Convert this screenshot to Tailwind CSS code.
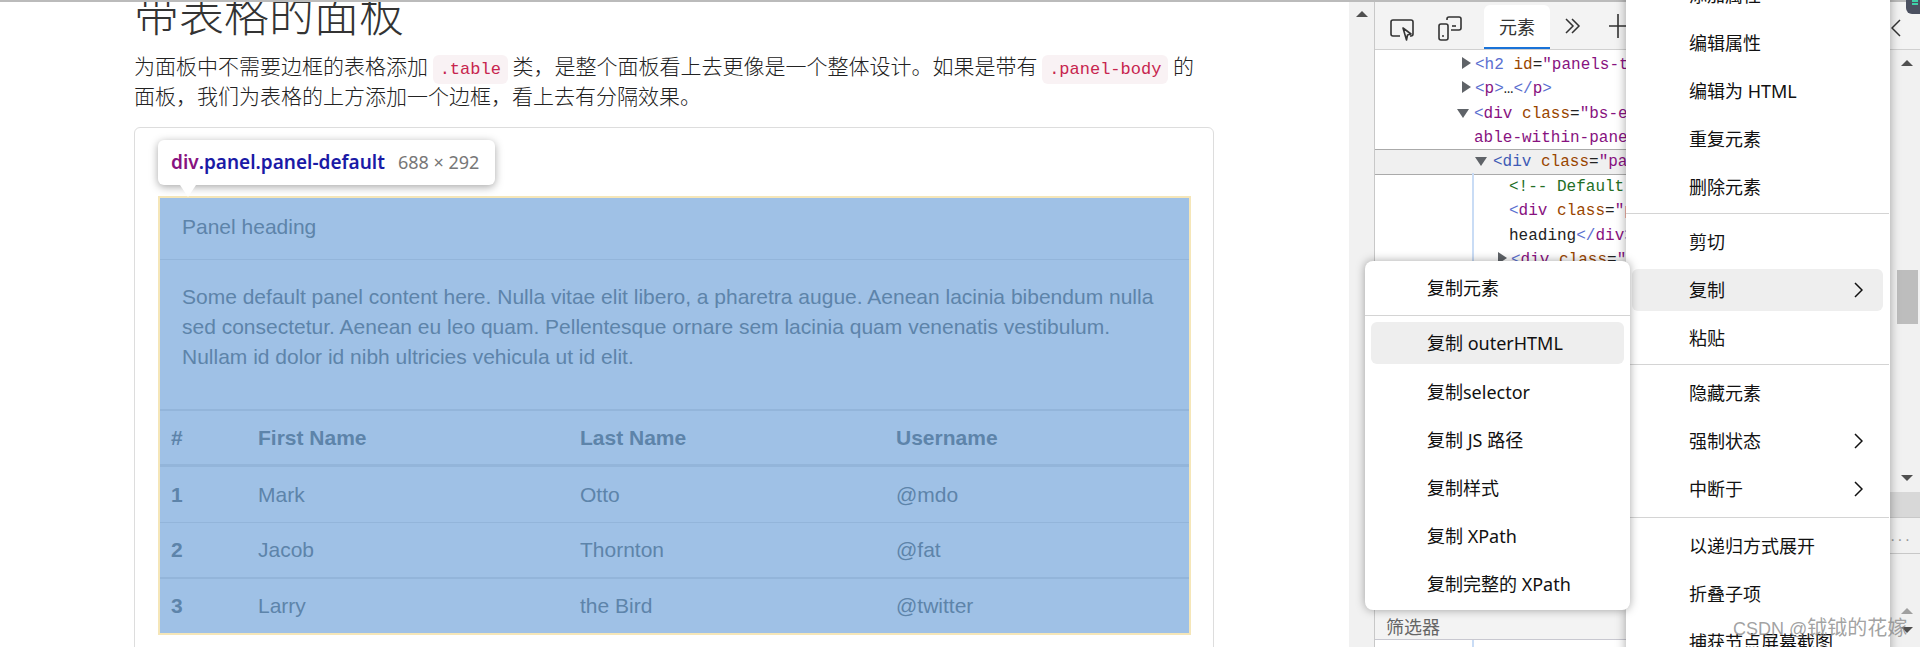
<!DOCTYPE html>
<html lang="zh-CN">
<head>
    <meta charset="UTF-8">
    <title>带表格的面板</title>
    <script src="https://cdn.jsdelivr.net/npm/@tailwindcss/browser@4"></script>
</head>
<body class="bg-white">
    <div class="relative w-[1920px] h-[647px] overflow-hidden flex font-['Liberation_Sans','Noto_Sans_CJK_SC',sans-serif]">
        <!-- Page -->
        <main class="w-[1349px] shrink-0 pl-[134px] pt-[2px]">
            <h2 class="-mt-[14px] h-[50px] leading-[50px] text-[45px] text-[#333] font-['Noto_Sans_CJK_SC',sans-serif] font-light">带表格的面板</h2>
            <p class="mt-[12px] w-[1080px] text-[21px] leading-[30px] text-[#222] font-['Noto_Sans_CJK_SC',sans-serif] font-light">为面板中不需要边框的表格添加 <code class="px-[7px] py-[5px] leading-none rounded-md bg-[#f9f2f4] text-[#c7254e] text-[17px] font-['Liberation_Mono',monospace]">.table</code> 类，是整个面板看上去更像是一个整体设计。如果是带有 <code class="px-[7px] py-[5px] leading-none rounded-md bg-[#f9f2f4] text-[#c7254e] text-[17px] font-['Liberation_Mono',monospace]">.panel-body</code> 的面板，我们为表格的上方添加一个边框，看上去有分隔效果。</p>
            <div class="mt-[17px] w-[1080px] h-[530px] border border-[#ddd] rounded-md pl-[23px] pt-[68px]">
                <div class="w-[1033px] h-[439px] bg-[#9fc1e6] border-[2px] border-[#f5e6b8] text-[21px] text-[#5d84aa]">
                    <div class="h-[62px] leading-[58px] pl-[22px] border-b border-[#93b5da]">Panel heading</div>
                    <div class="h-[151px] pl-[22px] pr-[30px] pt-[22px] leading-[30px] border-b-[2px] border-[#93b5da]">Some default panel content here. Nulla vitae elit libero, a pharetra augue. Aenean lacinia bibendum nulla sed consectetur. Aenean eu leo quam. Pellentesque ornare sem lacinia quam venenatis vestibulum. Nullam id dolor id nibh ultricies vehicula ut id elit.</div>
                    <div class="grid grid-cols-[87px_322px_316px_1fr] pl-[11px] h-[56px] items-center border-b-[3px] border-[#93b5da] font-bold">
                        <span>#</span><span>First Name</span><span>Last Name</span><span>Username</span>
                    </div>
                    <div class="grid grid-cols-[87px_322px_316px_1fr] pl-[11px] h-[56px] items-center border-b border-[#93b5da]">
                        <span class="font-bold">1</span><span>Mark</span><span>Otto</span><span>@mdo</span>
                    </div>
                    <div class="grid grid-cols-[87px_322px_316px_1fr] pl-[11px] h-[56px] items-center border-b-[2px] border-[#93b5da]">
                        <span class="font-bold">2</span><span>Jacob</span><span>Thornton</span><span>@fat</span>
                    </div>
                    <div class="grid grid-cols-[87px_322px_316px_1fr] pl-[11px] h-[53px] items-center">
                        <span class="font-bold">3</span><span>Larry</span><span>the Bird</span><span>@twitter</span>
                    </div>
                </div>
            </div>
        </main>

        <!-- Page scrollbar -->
        <div class="w-[25px] shrink-0 bg-[#f1f1f1] flex justify-center pt-[11px]">
            <div class="w-0 h-0 border-x-[6px] border-x-transparent border-b-[6px] border-b-[#505050]"></div>
        </div>

        <!-- Devtools -->
        <section class="flex-1 flex flex-col border-l border-[#c8c8c8]">
            <div class="h-[50px] shrink-0 bg-[#f3f3f3] border-b border-[#d0d0d0] flex items-start pt-[5px] pl-[14px]">
                <svg class="w-[26px] h-[24px] mt-[13px]" viewBox="0 0 26 24" fill="none" stroke="#333" stroke-width="1.6"><path d="M11 18H4a2 2 0 0 1-2-2V4a2 2 0 0 1 2-2h18a2 2 0 0 1 2 2v12a2 2 0 0 1-2 2h-1"/><path d="M14 10l8 6-3.5 1-1 5z" fill="#f3f3f3" stroke-linejoin="round"/></svg>
                <svg class="w-[26px] h-[26px] ml-[22px] mt-[11px]" viewBox="0 0 26 26" fill="none" stroke="#333" stroke-width="1.6"><path d="M10 4V3a2 2 0 0 1 2-2h10a2 2 0 0 1 2 2v9a2 2 0 0 1-2 2h-8"/><path d="M15 10h4"/><rect x="2" y="8" width="9" height="16" rx="2" fill="#f3f3f3"/><path d="M5 20h2"/></svg>
                <div class="ml-[21px] w-[66px] h-[44px] bg-white rounded-t-md border-b-[2px] border-[#1a73d8] text-[18px] text-[#333] text-center leading-[42px] font-['Noto_Sans_CJK_SC',sans-serif]">元素</div>
                <svg class="w-[16px] h-[16px] ml-[15px] mt-[13px]" viewBox="0 0 16 16" fill="none" stroke="#333" stroke-width="1.5"><path d="M1 1l7 7-7 7M7 1l7 7-7 7"/></svg>
                <svg class="w-[18px] h-[24px] ml-[28px] mt-[9px]" viewBox="0 0 18 24" stroke="#333" stroke-width="1.6"><path d="M0 12h18M9 0v24"/></svg>
            </div>
            <div class="flex-1 relative font-['Liberation_Mono',monospace] text-[16px] leading-[24.3px] text-[#222] whitespace-nowrap overflow-hidden pt-[3px]">
                <div class="pl-[100px]"><span class="text-[#5a6fd0]">&lt;h2</span> <span class="text-[#994500]">id</span>=<span class="text-[#881280]">"panels-tables"</span></div>
                <div class="pl-[100px]"><span class="text-[#5a6fd0]">&lt;</span><span class="text-[#881280]">p</span><span class="text-[#5a6fd0]">&gt;</span>…<span class="text-[#5a6fd0]">&lt;/</span><span class="text-[#881280]">p</span><span class="text-[#5a6fd0]">&gt;</span></div>
                <div class="pl-[99px]"><span class="text-[#5a6fd0]">&lt;</span><span class="text-[#881280]">div</span> <span class="text-[#994500]">class</span>=<span class="text-[#881280]">"bs-example"</span></div>
                <div class="pl-[99px] text-[#881280]">able-within-panel"</div>
                <div class="h-[24px] pl-[118px] -mt-[1px] bg-[#f0f0f0] box-content border-y border-[#aaa]"><span class="text-[#3f5bb5]">&lt;div</span> <span class="text-[#994500]">class</span>=<span class="text-[#881280]">"panel"</span></div>
                <div class="pl-[134px] text-[#236e25]">&lt;!-- Default panel --&gt;</div>
                <div class="pl-[134px]"><span class="text-[#5a6fd0]">&lt;</span><span class="text-[#881280]">div</span> <span class="text-[#994500]">class</span>=<span class="text-[#881280]">"panel"</span></div>
                <div class="pl-[134px]">heading<span class="text-[#5a6fd0]">&lt;/</span><span class="text-[#881280]">div</span><span class="text-[#5a6fd0]">&gt;</span></div>
                <div class="pl-[136px]"><span class="text-[#5a6fd0]">&lt;</span><span class="text-[#881280]">div</span> <span class="text-[#994500]">class</span>=<span class="text-[#881280]">"panel"</span></div>
                <!-- expand arrows -->
                <div class="absolute left-[87px] top-[7px] w-0 h-0 border-y-[6px] border-y-transparent border-l-[9px] border-l-[#5f6368]"></div>
                <div class="absolute left-[87px] top-[31px] w-0 h-0 border-y-[6px] border-y-transparent border-l-[9px] border-l-[#5f6368]"></div>
                <div class="absolute left-[82px] top-[59px] w-0 h-0 border-x-[6px] border-x-transparent border-t-[9px] border-t-[#5f6368]"></div>
                <div class="absolute left-[100px] top-[107px] w-0 h-0 border-x-[6px] border-x-transparent border-t-[9px] border-t-[#5f6368]"></div>
                <div class="absolute left-[123px] top-[202px] w-0 h-0 border-y-[6px] border-y-transparent border-l-[9px] border-l-[#5f6368]"></div>
                <div class="absolute left-[97px] top-[123px] bottom-0 w-[2px] bg-[#c9dcf5]"></div>
                <!-- filter bar -->
                <div class="absolute left-0 right-0 top-[560px] h-[30px] bg-[#f3f3f3]"></div>
                <div class="absolute left-0 right-0 top-[589px] h-px bg-[#c8c8d0]"></div>
                <div class="absolute left-[11px] top-[564px] text-[18px] text-[#666] font-['Noto_Sans_CJK_SC',sans-serif]">筛选器</div>
            </div>
        </section>

        <!-- Right edge of devtools -->
        <aside class="absolute right-0 top-0 w-[30px] h-full bg-[#f1f1f1] flex flex-col">
            <div class="h-[50px] shrink-0 bg-[#f3f3f3] border-b border-[#d0d0d0] pl-[1px] pt-[19px]">
                <svg class="w-[10px] h-[18px]" viewBox="0 0 10 18" fill="none" stroke="#333" stroke-width="1.5"><path d="M9 1L1 9l8 8"/></svg>
            </div>
            <div class="flex-1 relative">
                <div class="absolute left-[11px] top-[10px] w-0 h-0 border-x-[6px] border-x-transparent border-b-[6px] border-b-[#505050]"></div>
                <div class="absolute left-[7px] top-[220px] w-[21px] h-[54px] bg-[#bdbdbd]"></div>
                <div class="absolute left-[11px] top-[425px] w-0 h-0 border-x-[6px] border-x-transparent border-t-[6px] border-t-[#505050]"></div>
                <div class="absolute left-0 right-0 top-[442px] h-[25px] bg-[#d8d8d8]"></div>
                <div class="absolute left-0 right-0 top-[467px] h-px bg-[#c8c8c8]"></div>
                <div class="absolute left-0 top-[482px] text-[16px] leading-[16px] tracking-[2px] text-[#999]">···</div>
                <div class="absolute left-0 right-0 top-[503px] h-px bg-[#c8c8c8]"></div>
                <div class="absolute left-[11px] top-[558px] w-0 h-0 border-x-[6px] border-x-transparent border-b-[6px] border-b-[#a0a0a0]"></div>
                <div class="absolute left-[11px] top-[577px] w-0 h-0 border-x-[6px] border-x-transparent border-t-[6px] border-t-[#505050]"></div>
            </div>
        </aside>

        <div class="absolute left-0 top-0 w-full h-[2px] bg-[#bbbbbb]"></div>

        <!-- Main context menu -->
        <div class="absolute left-[1626px] -top-[29px] w-[264px] h-[700px] bg-white shadow-[0_0_10px_rgba(0,0,0,0.35)] pl-[6px] pr-[7px] text-[18px] text-[#111] font-['Noto_Sans',_'Noto_Sans_CJK_SC',sans-serif]">
            <div class="h-[48px] leading-[48px] pl-[57px]">添加属性</div>
            <div class="h-[48px] leading-[48px] pl-[57px]">编辑属性</div>
            <div class="h-[48px] leading-[48px] pl-[57px]">编辑为 HTML</div>
            <div class="h-[48px] leading-[48px] pl-[57px]">重复元素</div>
            <div class="h-[48px] leading-[48px] pl-[57px]">删除元素</div>
            <div class="-mx-[6px] mt-[2px] mb-[4px] h-px bg-[#d4d4d4]"></div>
            <div class="h-[48px] leading-[48px] pl-[57px]">剪切</div>
            <div class="flex items-center justify-between h-[42px] my-[3px] bg-[#eeeeee] rounded-md pl-[57px] pr-[20px]">复制 <svg class="w-[9px] h-[16px]" viewBox="0 0 9 16" fill="none" stroke="#111" stroke-width="1.5"><path d="M1 1l7 7-7 7"/></svg></div>
            <div class="h-[48px] leading-[48px] pl-[57px]">粘贴</div>
            <div class="-mx-[6px] mt-[2px] mb-[4px] h-px bg-[#d4d4d4]"></div>
            <div class="h-[48px] leading-[48px] pl-[57px]">隐藏元素</div>
            <div class="flex items-center justify-between h-[48px] pl-[57px] pr-[20px]">强制状态 <svg class="w-[9px] h-[16px]" viewBox="0 0 9 16" fill="none" stroke="#111" stroke-width="1.5"><path d="M1 1l7 7-7 7"/></svg></div>
            <div class="flex items-center justify-between h-[48px] pl-[57px] pr-[20px]">中断于 <svg class="w-[9px] h-[16px]" viewBox="0 0 9 16" fill="none" stroke="#111" stroke-width="1.5"><path d="M1 1l7 7-7 7"/></svg></div>
            <div class="-mx-[6px] mt-[4px] mb-[4px] h-px bg-[#d4d4d4]"></div>
            <div class="h-[48px] leading-[48px] pl-[57px]">以递归方式展开</div>
            <div class="h-[48px] leading-[48px] pl-[57px]">折叠子项</div>
            <div class="h-[48px] leading-[48px] pl-[57px]">捕获节点屏幕截图</div>
        </div>

        <!-- Copy submenu -->
        <div class="absolute left-[1365px] top-[261px] w-[265px] h-[349px] bg-white rounded-lg shadow-[0_0_10px_rgba(0,0,0,0.35)] px-[6px] text-[18px] text-[#111] font-['Noto_Sans',_'Noto_Sans_CJK_SC',sans-serif]">
            <div class="h-[54px] leading-[54px] pl-[56px]">复制元素</div>
            <div class="-mx-[6px] h-px bg-[#d4d4d4]"></div>
            <div class="h-[42px] leading-[42px] mt-[6px] bg-[#eeeeee] rounded-md pl-[56px]">复制 outerHTML</div>
            <div class="h-[48px] leading-[48px] mt-[4px] pl-[56px]">复制selector</div>
            <div class="h-[48px] leading-[48px] pl-[56px]">复制 JS 路径</div>
            <div class="h-[48px] leading-[48px] pl-[56px]">复制样式</div>
            <div class="h-[48px] leading-[48px] pl-[56px]">复制 XPath</div>
            <div class="h-[48px] leading-[48px] pl-[56px]">复制完整的 XPath</div>
        </div>

        <!-- Element tooltip -->
        <div class="absolute left-[158px] top-[140px] w-[337px] h-[45px] bg-white rounded-md shadow-[0_2px_8px_rgba(0,0,0,0.35)] pl-[13px] flex items-center text-[19px] font-['Noto_Sans',sans-serif] whitespace-nowrap">
            <b class="font-semibold text-[#881280]">div</b><b class="font-semibold text-[#1a1aa6]">.panel.panel-default</b>
            <span class="ml-[13px] text-[18px] text-[#777]">688 × 292</span>
        </div>
        <div class="absolute left-[180px] top-[185px] w-0 h-0 border-x-[8px] border-x-transparent border-t-[12px] border-t-white"></div>

        <!-- Tray badge, top right -->
        <div class="absolute right-0 top-0 w-[14px] h-[14px] bg-[#4b5060] rounded-bl-md pl-[6px] flex flex-col gap-[1px]">
            <div class="h-[2px] w-[6px] bg-[#3fd0a8]"></div>
            <div class="h-[2px] w-[6px] bg-[#3fd0a8]"></div>
        </div>

        <div class="absolute left-[1733px] top-[613px] text-[18px] leading-[30px] text-[#8a8a8a]/80 whitespace-nowrap">CSDN @<span class="text-[20px]">钺钺的花嫁</span></div>
    </div>
</body>
</html>
